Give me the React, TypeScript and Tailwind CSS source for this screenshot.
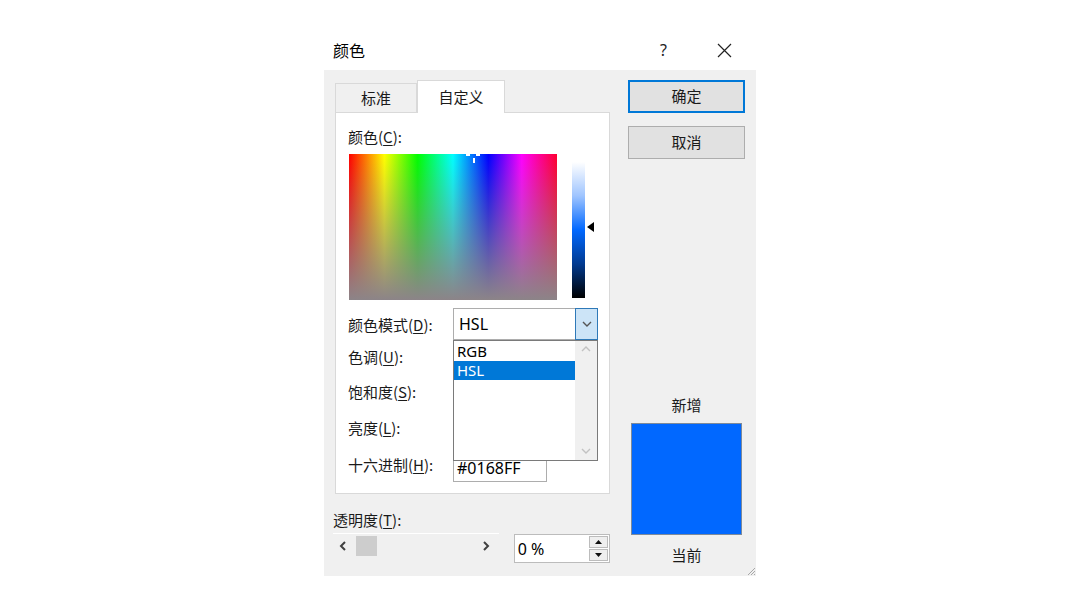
const cjk = "font-['Noto_Sans_CJK_SC',sans-serif]"
const latin = "font-['Noto_Sans','Noto_Sans_CJK_SC',sans-serif]"

const Chevron = ({ dir, className, w = 1.4 }: { dir: 'up' | 'down' | 'left' | 'right'; className?: string; w?: number }) => {
  const pts = {
    up: '2,7 6,3 10,7',
    down: '2,4 6,8 10,4',
    left: '7,2 3,6 7,10',
    right: '4,2 8,6 4,10',
  }[dir]
  return (
    <svg width="12" height="12" viewBox="0 0 12 12" className={className}>
      <polyline points={pts} fill="none" stroke="currentColor" strokeWidth={w} />
    </svg>
  )
}

const Label = ({ text, k }: { text: string; k: string }) => (
  <span className="text-[15px] leading-5 text-[#1a1a1a]">
    {text}(<span className="underline underline-offset-2">{k}</span>):
  </span>
)

export default function App() {
  return (
    <div className={`w-[1080px] h-[608px] bg-white ${cjk} text-black`}>
      <div className="ml-[324px] pt-[30px] w-[432px]">
        {/* Title bar */}
        <div className="h-10 flex items-center pl-[9px]">
          <span className="text-[16px] leading-5">颜色</span>
          <span className={`ml-auto text-[16px] ${latin} text-[#222]`}>?</span>
          <svg width="15" height="15" viewBox="0 0 15 15" className="ml-[50px] mr-[24px]">
            <path d="M1 1 L14 14 M14 1 L1 14" stroke="#222" strokeWidth="1.2" />
          </svg>
        </div>

        {/* Body */}
        <div className="relative h-[506px] bg-[#f0f0f0] flex pt-[10px] pl-[11px]">
          {/* Left column */}
          <div className="w-[275px] flex flex-col">
            {/* Tabs */}
            <div className="h-8 flex items-end">
              <div className="w-[82px] h-[29px] border border-b-0 border-[#d9d9d9] bg-[#f0f0f0] flex items-center justify-center text-[15px] text-[#1a1a1a]">
                标准
              </div>
              <div className="relative z-10 -mb-px w-[88px] h-[33px] border border-b-0 border-[#d9d9d9] bg-white flex items-center justify-center text-[15px] text-[#1a1a1a]">
                自定义
              </div>
            </div>

            {/* Panel */}
            <div className="h-[382px] bg-white border border-[#d9d9d9] pl-[12px] pt-[14px] flex flex-col">
              <Label text="颜色" k="C" />

              <div className="mt-[7px] ml-px flex">
                <div className="relative w-[208px] h-[146px] bg-[linear-gradient(to_right,#ff0000,#ffff00_17%,#00ff00_33%,#00ffff_50%,#0000ff_67%,#ff00ff_83%,#ff0030)]">
                  <div className="w-full h-full bg-[linear-gradient(to_bottom,rgba(140,132,136,0),rgba(140,132,136,0.55)_55%,#8c8488)]" />
                  <div className="absolute left-[117px] top-0 w-[4px] h-[2px] bg-white" />
                  <div className="absolute left-[127px] top-0 w-[4px] h-[2px] bg-white" />
                  <div className="absolute left-[124px] top-[4px] w-[2px] h-[5px] bg-white" />
                </div>
                <div className="ml-[15px] mt-[8px] w-[13px] h-[136px] bg-[linear-gradient(to_bottom,#ffffff,#9ec4ff_25%,#0168ff_50%,#013a90_75%,#000000)]" />
                <svg width="8" height="10" viewBox="0 0 8 10" className="ml-[2px] mt-[68px]">
                  <polygon points="7,0 0,5 7,10" fill="#000" />
                </svg>
              </div>

              {/* Fields */}
              <div className="mt-[8px] flex flex-col">
                <div className="h-8 flex items-center">
                  <div className="w-[105px]"><Label text="颜色模式" k="D" /></div>
                  <div className="relative w-[145px] h-8 border border-[#adadad] flex">
                    <span className={`flex-1 pl-[5px] text-[16px] leading-[30px] ${latin}`}>HSL</span>
                    <div className="-m-px w-[23px] h-8 border border-[#2e79b8] bg-[#cce4f7] flex items-center justify-center text-[#555]">
                      <Chevron dir="down" />
                    </div>
                    {/* open list */}
                    <div className="absolute z-20 left-[-1px] top-[31px] w-[145px] h-[121px] border border-[#7a7a7a] bg-white flex">
                      <div className={`flex-1 pt-[1px] ${latin} text-[15px]`}>
                        <div className="h-[19px] leading-[19px] pl-[3px]">RGB</div>
                        <div className="h-[19px] leading-[19px] pl-[3px] bg-[#0078d7] text-white">HSL</div>
                      </div>
                      <div className="w-[22px] bg-[#f0f0f0] flex flex-col items-center justify-between py-[3px] text-[#c2c2c2]">
                        <Chevron dir="up" />
                        <Chevron dir="down" />
                      </div>
                    </div>
                  </div>
                </div>
                <div className="h-[34px] flex items-center"><Label text="色调" k="U" /></div>
                <div className="h-9 flex items-center"><Label text="饱和度" k="S" /></div>
                <div className="h-9 flex items-center"><Label text="亮度" k="L" /></div>
                <div className="h-9 flex items-center">
                  <div className="w-[105px]"><Label text="十六进制" k="H" /></div>
                  <div className={`mt-[8px] w-[94px] h-[28px] border border-[#adadad] bg-white pl-[3px] text-[16px] leading-[26px] ${latin}`}>
                    #0168FF
                  </div>
                </div>
              </div>
            </div>

            {/* Transparency */}
            <div className="mt-[13px] -ml-[2px]">
              <Label text="透明度" k="T" />
            </div>
            <div className="mt-[2px] -ml-[2px] flex items-start">
              <div className="w-[167px] h-[25px] border-t border-white flex items-center text-[#404040]">
                <Chevron dir="left" className="ml-[5px]" w={2} />
                <div className="ml-[6px] w-[21px] h-[20px] bg-[#cdcdcd]" />
                <Chevron dir="right" className="ml-auto mr-[7px]" w={2} />
              </div>
              <div className="ml-[15px] mt-[1px] w-[97px] h-[29px] border border-[#bcbcbc] bg-white flex items-center">
                <span className={`flex-1 pl-[3px] text-[16px] ${latin}`}>0 %</span>
                <div className="mr-[1px] w-[19px] h-[25px] flex flex-col gap-px">
                  <div className="flex-1 border border-[#bcbcbc] bg-[#efefef] flex items-center justify-center">
                    <svg width="7" height="4" viewBox="0 0 7 4"><polygon points="0,4 3.5,0 7,4" fill="#111" /></svg>
                  </div>
                  <div className="flex-1 border border-[#bcbcbc] bg-[#efefef] flex items-center justify-center">
                    <svg width="7" height="4" viewBox="0 0 7 4"><polygon points="0,0 3.5,4 7,0" fill="#111" /></svg>
                  </div>
                </div>
              </div>
            </div>
          </div>

          {/* Right column */}
          <div className="ml-[18px] w-[117px] flex flex-col">
            <button className="h-[33px] border-2 border-[#0078d7] bg-[#e1e1e1] text-[15px] text-[#1a1a1a]">确定</button>
            <button className="mt-[13px] h-[33px] border border-[#adadad] bg-[#e1e1e1] text-[15px] text-[#1a1a1a]">取消</button>
            <div className="mt-[236px] text-center text-[15px] leading-5 text-[#1a1a1a]">新增</div>
            <div className="mt-[8px] ml-[3px] w-[111px] h-[112px] bg-[#0168ff] border border-[#7d8a9a]" />
            <div className="mt-[10px] text-center text-[15px] leading-5 text-[#1a1a1a]">当前</div>
          </div>

          {/* Resize grip */}
          <svg width="11" height="11" viewBox="0 0 11 11" className="absolute right-0 bottom-0">
            <path d="M10 3 L3 10 M10 6 L6 10 M10 9 L9 10" stroke="#a8a8a8" strokeWidth="1" />
          </svg>
        </div>
      </div>
    </div>
  )
}
